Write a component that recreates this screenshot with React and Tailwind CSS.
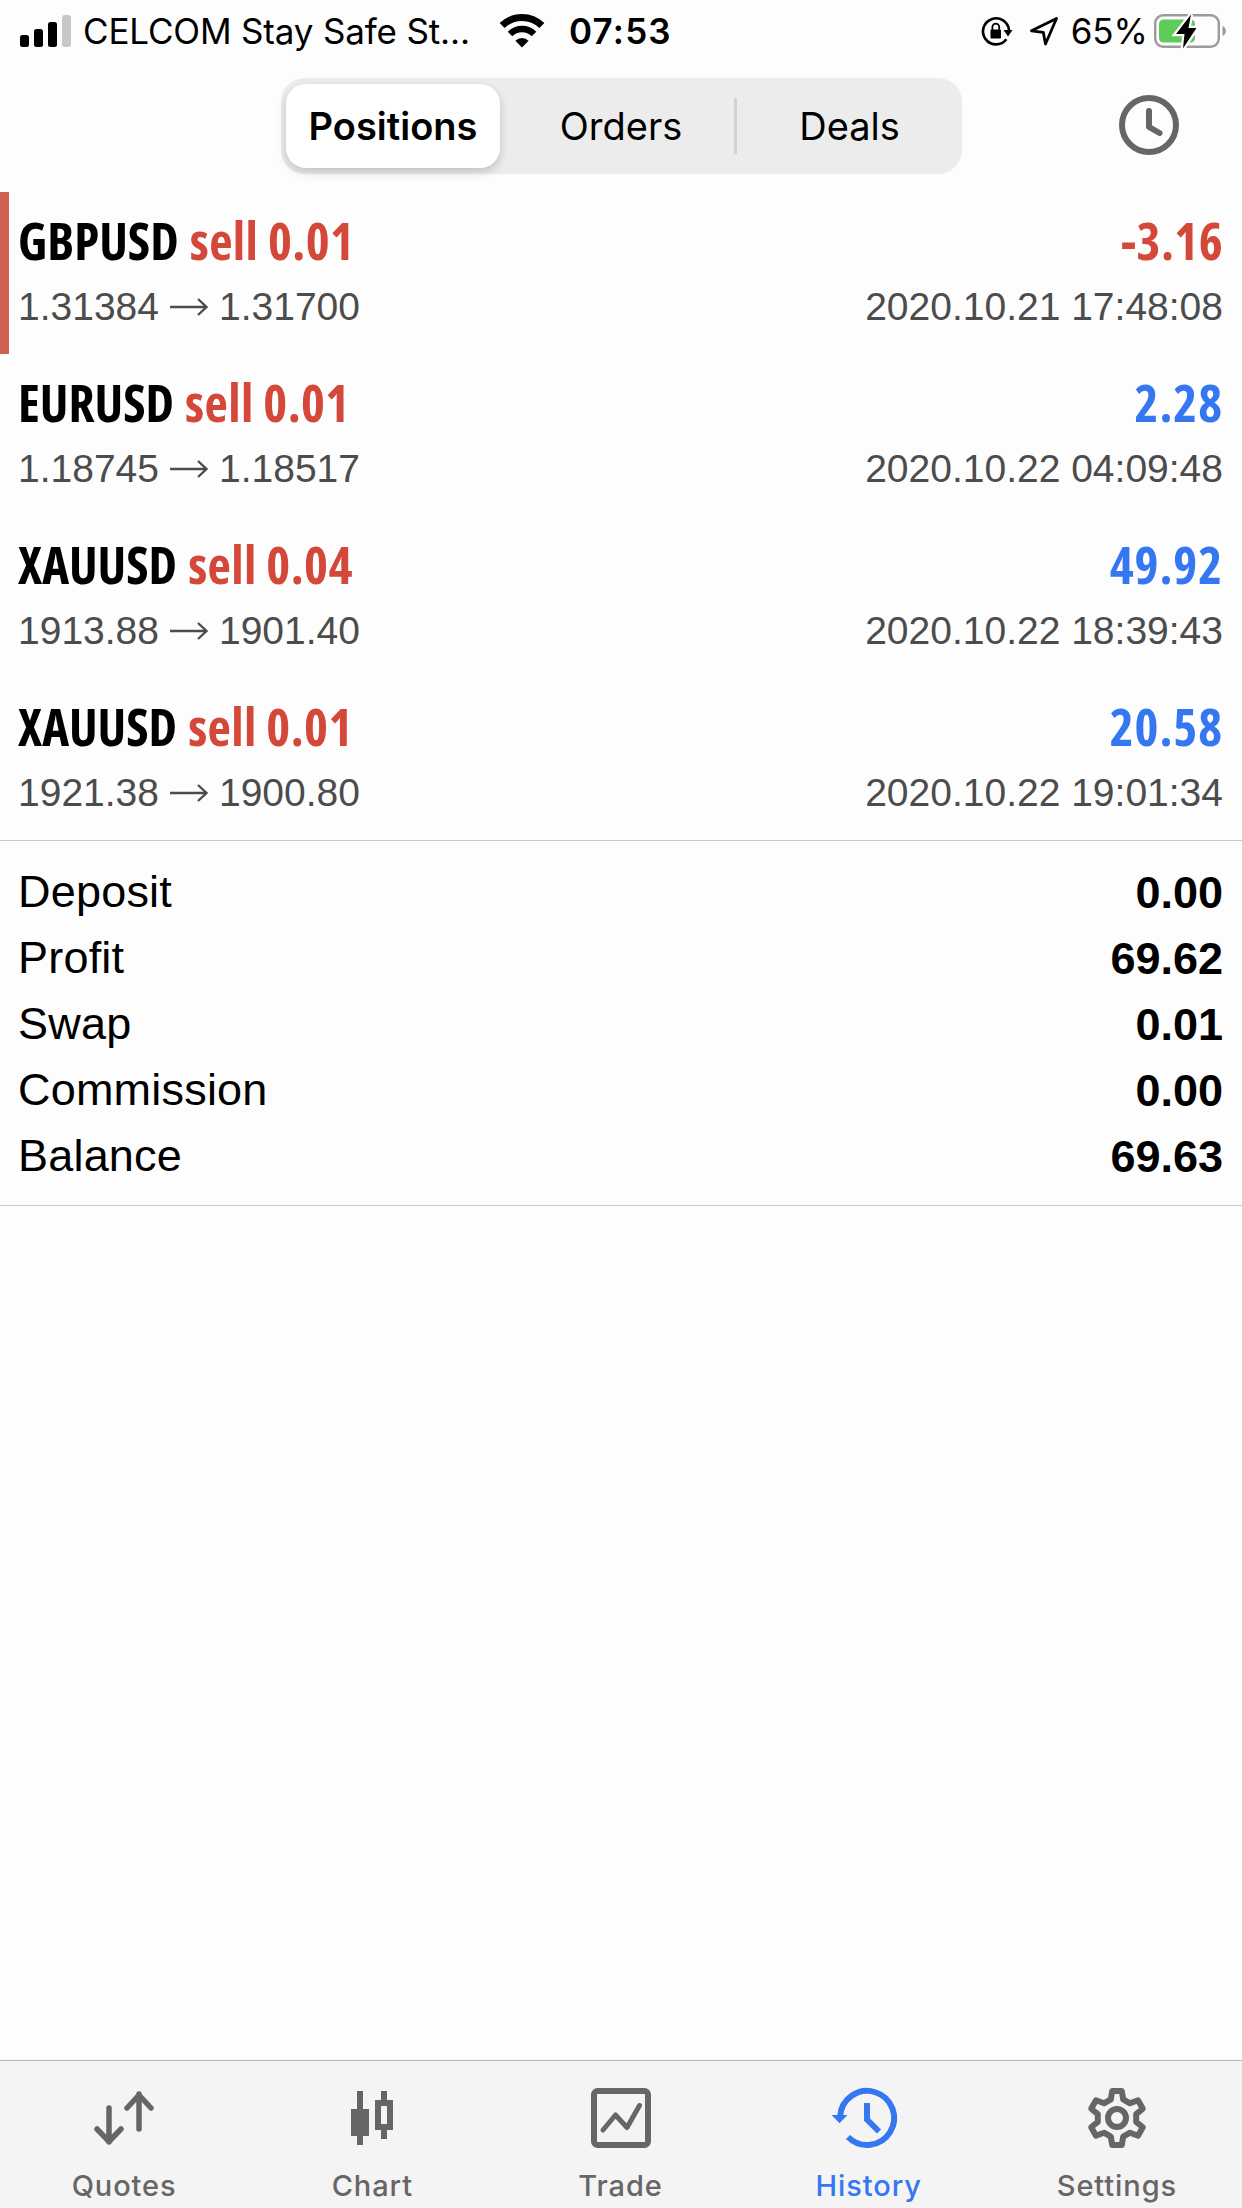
import React, {useState} from 'react'

const positions = [
    {symbol: "GBPUSD", volume: "sell 0.01", open: "1.31384", close: "1.31700", profit: "-3.16", time: "2020.10.21 17:48:08", selected: true},
    {symbol: "EURUSD", volume: "sell 0.01", open: "1.18745", close: "1.18517", profit: "2.28", time: "2020.10.22 04:09:48"},
    {symbol: "XAUUSD", volume: "sell 0.04", open: "1913.88", close: "1901.40", profit: "49.92", time: "2020.10.22 18:39:43"},
    {symbol: "XAUUSD", volume: "sell 0.01", open: "1921.38", close: "1900.80", profit: "20.58", time: "2020.10.22 19:01:34"},
];

const summary = [
    {label: "Deposit", value: "0.00"},
    {label: "Profit", value: "69.62"},
    {label: "Swap", value: "0.01"},
    {label: "Commission", value: "0.00"},
    {label: "Balance", value: "69.63"},
];

function StatusBar() {
    return (
        <div className="flex h-[62px] items-center pl-5 pr-[14px] text-[35px] leading-[62px] text-black">
            <svg className="h-[34px] w-[52px] shrink-0" viewBox="0 0 52 34">
                <rect x="0" y="21" width="9" height="12" rx="2.5" />
                <rect x="14" y="15" width="9" height="18" rx="2.5" />
                <rect x="28" y="8" width="9" height="25" rx="2.5" />
                <rect x="42" y="1" width="9" height="32" rx="2.5" fill="#c8c8c8" />
            </svg>
            <span className="ml-[11px] w-[388px] whitespace-nowrap tracking-[-0.16px]">CELCOM Stay Safe St...</span>
            <svg className="ml-[28px] h-[34px] w-[46px] shrink-0" viewBox="0 0 46 34">
                <path d="M3.1 11.6a28.5 28.5 0 0 1 39.8 0" fill="none" stroke="#000" strokeWidth="7" />
                <path d="M11 20a17 17 0 0 1 24 0" fill="none" stroke="#000" strokeWidth="6.5" />
                <path d="M23 33.5l-6.6-6.8a9.4 9.4 0 0 1 13.2 0z" />
            </svg>
            <span className="ml-[24px] font-semibold tracking-[1.2px]">07:53</span>
            <div className="ml-auto flex items-center">
                {/* Rotation lock */}
                <svg className="h-[34px] w-[34px]" viewBox="0 0 34 34">
                    <path d="M26.4 25.2A13 13 0 1 1 29 16.5" fill="none" stroke="#000" strokeWidth="2.6" />
                    <path d="M23.5 16h9l-4.5 6.5z" />
                    <rect x="10.5" y="15.5" width="10.5" height="9" rx="1" />
                    <path d="M12.4 16v-3a3.4 3.4 0 0 1 6.8 0v3" fill="none" stroke="#000" strokeWidth="1.8" />
                </svg>
                <svg className="ml-[15px] h-[30px] w-[30px]" viewBox="0 0 30 30">
                    <path d="M27.500 2.500L2.500 14.800l11.800 1.500L16.500 28z" fill="none" stroke="#000" strokeWidth="2.8" strokeLinejoin="round" />
                </svg>
                <span className="ml-[12px]">65%</span>
                <svg className="ml-[6px] h-[36px] w-[74px]" viewBox="0 0 74 36">
                    <rect x="1.2" y="2.2" width="63.6" height="31.6" rx="8" fill="none" stroke="#9b9b9b" strokeWidth="2.4" />
                    <path d="M68.5 13c4.5 1.500 4.500 8.500 0 10z" fill="#9b9b9b" />
                    <rect x="5" y="6.500" width="36" height="23" rx="4.500" fill="#5fcb5a" />
                    <path d="M37 1.500L22 21h8.500L29 35.500 42.500 15h-8z" fill="#000" stroke="#fff" strokeWidth="4.500" paintOrder="stroke" />
                </svg>
            </div>
        </div>
    );
}

function PositionRow({item}) {
    return (
        <div className="flex h-[162px]">
            <div className={item.selected ? "w-[9px] bg-[#d0604f]" : "w-[9px]"} />
            <div className="flex-1 pl-[9px] pr-[19px] pt-[18px]">
                <div className="flex h-[60px] justify-between whitespace-nowrap font-['Open_Sans',sans-serif] text-[51px] font-bold leading-[60px] [font-stretch:75%]">
                    <div className="flex">
                        <span className="text-black">{item.symbol}</span>
                        <span className="ml-[11px] tracking-[0.4px] text-[#d4483a]">{item.volume}</span>
                    </div>
                    <div className={item.profit.startsWith("-") ? "tracking-[0.4px] text-[#d4483a]" : "tracking-[0.9px] text-[#3577f0]"}>
                        {item.profit}
                    </div>
                </div>
                <div className="mt-[13px] flex justify-between font-['Liberation_Sans',Arial,sans-serif] text-[39px] leading-[48px] text-[#4c4c4c]">
                    <div className="flex items-center">
                        {item.open}
                        <svg className="ml-[11px] mr-[11px] h-[18px] w-[38px]" viewBox="0 0 38 18" fill="none" stroke="#4c4c4c" strokeWidth="2.4">
                            <path d="M0 9h36M28 1l8.500 8-8.500 8" />
                        </svg>
                        {item.close}
                    </div>
                    <div>{item.time}</div>
                </div>
            </div>
        </div>
    );
}

function TabItem({label, active, children}) {
    return (
        <div className={active ? "flex flex-1 flex-col items-center pt-[27px] text-[#3577f0]" : "flex flex-1 flex-col items-center pt-[27px] text-[#666666]"}>
            <svg className="h-[60px] w-[60px] overflow-visible" viewBox="0 0 60 60" fill="none" stroke="currentColor" strokeWidth="6">
                {children}
            </svg>
            <span className="mt-[20px] text-[29px] font-medium leading-[36px] tracking-[0.9px]">{label}</span>
        </div>
    );
}

export default function App() {

    const [tab, setTab] = useState("Positions")

    return (
        <div className="flex h-[2208px] w-[1242px] flex-col overflow-hidden bg-[#fdfdfd] font-[Inter,sans-serif]">
            <StatusBar />

            {/* Segmented control and the period button */}
            <div className="flex h-[130px] items-start pl-[281px] pt-4">
                <div className="flex h-[96px] w-[681px] items-center rounded-[24px] bg-[#ececec] py-[6px] pl-[5px] pr-[6px] text-[38px] text-black">
                    <button
                        className="h-[84px] w-[214px] rounded-[20px] bg-white font-semibold shadow-[0_4px_10px_rgba(0,0,0,0.18)]"
                        onClick={() => setTab("Positions")}
                    >
                        Positions
                    </button>
                    <button className="h-[84px] w-[234px] pl-2" onClick={() => setTab("Orders")}>Orders</button>
                    <div className="h-[56px] w-[3px] bg-[#d2d2d2]" />
                    <button className="h-[84px] flex-1 pl-[6px]" onClick={() => setTab("Deals")}>Deals</button>
                </div>
                <svg className="ml-[157px] mt-[17px] h-[60px] w-[60px]" viewBox="0 0 60 60" fill="none" stroke="#666666" strokeWidth="6">
                    <circle cx="30" cy="30" r="27" />
                    <path d="M30 16v16l10.500 6" strokeLinecap="round" strokeLinejoin="round" />
                </svg>
            </div>

            <div className="flex flex-col">
                {positions.map((item) => (
                    <PositionRow key={item.time} item={item} />
                ))}
            </div>

            <div className="h-[366px] border-y border-[#c8c8c8] pl-[18px] pr-[19px] pt-[18px] font-['Liberation_Sans',Arial,sans-serif] text-[45px] leading-[66px] text-black">
                {summary.map((row) => (
                    <div key={row.label} className="flex h-[66px] justify-between">
                        <span className="tracking-[0.2px]">{row.label}</span>
                        <span className="pt-px font-bold">{row.value}</span>
                    </div>
                ))}
            </div>

            <div className="mt-auto flex h-[148px] border-t border-[#b2b6b2] bg-[#f4f4f4] pr-px">
                <TabItem label="Quotes">
                    <path d="M15 20v34M3 41l12 12.500L27 41M45 41V6M33 20L45 7l12 13" strokeWidth="5.500" strokeLinecap="round" strokeLinejoin="round" />
                </TabItem>
                <TabItem label="Chart">
                    <path d="M9 21h18v27H9zM15 3h6v54h-6z" fill="currentColor" stroke="none" />
                    <path d="M36 15h12v24H36zM42 3v9M42 42v9" />
                </TabItem>
                <TabItem label="Trade">
                    <rect x="3" y="3" width="54" height="54" rx="3.500" />
                    <path d="M12 42l12.500-15L36 39.500l12.500-22" strokeWidth="5" strokeLinecap="round" strokeLinejoin="round" />
                </TabItem>
                <TabItem label="History" active>
                    <path d="M1.200 28A27 27 0 1 1 9 49" />
                    <path d="M-7.500 27h16l-8 8.300z" fill="currentColor" stroke="none" />
                    <path d="M28 15v16.500l12 12" />
                </TabItem>
                <TabItem label="Settings">
                    <g transform="translate(30 30)">
                        <path d="M-4.800-27H4.800L6.200-18.600 13-14.700 21-17.700 25.800-9.300 19.200-3.900V3.900L25.800 9.300 21 17.700 13 14.700 6.200 18.600 4.800 27H-4.800L-6.200 18.600-13 14.700-21 17.700-25.800 9.300-19.200 3.900V-3.900L-25.800-9.300-21-17.700-13-14.700-6.200-18.600z" strokeLinejoin="round" />
                        <circle r="9" />
                    </g>
                </TabItem>
            </div>
        </div>
    );
}
